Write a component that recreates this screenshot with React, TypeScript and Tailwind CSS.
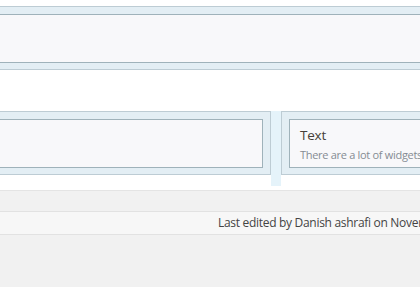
import React from "react";

export default function App() {
  return (
    <div
      className="w-[420px] h-[287px] overflow-hidden bg-white flex flex-col"
      style={{ fontFamily: '"Open Sans", "Noto Sans", sans-serif' }}
    >
      <div className="bg-white pt-[6px] pb-[4px] overflow-hidden">
        <div className="-mx-[20px] border-y border-[#bdccd4] bg-[#e3eef4] pt-[7px] pb-[6px]">
          <div className="mx-[7px] h-[49px] border border-[#9fb2ba] bg-[#f8f8fa]" />
        </div>

        <div className="mt-[41px] flex items-start -ml-[20px]">
          <div className="w-[291px] shrink-0 border border-[#bdccd4] bg-[#e3eef4] pt-[7px] pb-[6px] px-[7px]">
            <div className="h-[49px] border border-[#9fb2ba] bg-[#f8f8fa]" />
          </div>
          <div className="w-[10px] h-[75px] shrink-0 bg-[#e5f3fa]" />
          <div className="w-[220px] shrink-0 border border-[#bdccd4] bg-[#e3eef4] pt-[7px] pb-[6px] pl-[7px]">
            <div className="h-[49px] border border-r-0 border-[#9fb2ba] bg-[#f8f8fa] pl-[10px] pt-[6px] whitespace-nowrap overflow-hidden">
              <div className="text-[13.5px] leading-[18px] font-medium text-[#463f38] tracking-[-0.2px]">Text</div>
              <div className="mt-[3px] text-[11px] leading-[16px] text-[#858c93] tracking-[-0.3px]">
                There are a lot of widgets available
              </div>
            </div>
          </div>
        </div>
      </div>

      <div className="flex-1 border-t border-[#e4e4e4] bg-[#f1f1f1] pt-[20px]">
        <div className="h-[24px] border-y border-[#e2e2e2] bg-[#f7f7f7] pl-[218px] flex items-center whitespace-nowrap overflow-hidden">
          <span className="text-[12px] text-[#444444] tracking-[-0.3px]">
            Last edited by Danish ashrafi on November 24, 2020 at 10:15 am
          </span>
        </div>
      </div>
    </div>
  );
}
